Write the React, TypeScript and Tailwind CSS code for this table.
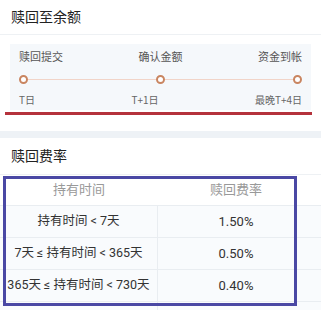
import React from 'react';

const steps = [
  { label: '赎回提交', day: 'T日' },
  { label: '确认金额', day: 'T+1日' },
  { label: '资金到帐', day: '最晚T+4日' },
];

const rates = [
  { range: '持有时间 < 7天', rate: '1.50%' },
  { range: '7天 ≤ 持有时间 < 365天', rate: '0.50%' },
  { range: '365天 ≤ 持有时间 < 730天', rate: '0.40%' },
];

function Dot() {
  return <span className="w-[9px] h-[9px] rounded-full border-2 border-[#c98560] bg-white flex-shrink-0" />;
}

export default function App() {
  return (
    <div
      className="relative w-[321px] h-[310px] overflow-hidden bg-white text-[#333]"
      style={{ fontFamily: 'Roboto, "Noto Sans CJK SC", "Noto Sans", sans-serif' }}
    >
      {/* 赎回至余额 */}
      <div className="h-[35px] px-[11px] flex items-center text-[14px] text-[#222] border-b border-[#eef1f4]">
        赎回至余额
      </div>

      <div className="mt-[9px] mx-[10px] bg-[#f5f8fb] px-[9px] pt-[6px] pb-[3px]">
        <div className="flex justify-between text-[11px] leading-[16px] text-[#555]">
          {steps.map(s => (
            <span key={s.label}>{s.label}</span>
          ))}
        </div>
        <div className="mt-[9px] flex items-center">
          <Dot />
          <span className="flex-1 h-px bg-[#f1d4c8]" />
          <Dot />
          <span className="flex-1 h-px bg-[#f1d4c8]" />
          <Dot />
        </div>
        <div
          className="mt-[9px] flex justify-between text-[10px] leading-[14px] text-[#666]"
          style={{ fontFamily: '"Noto Sans CJK SC", sans-serif' }}
        >
          {steps.map(s => (
            <span key={s.day}>{s.day}</span>
          ))}
        </div>
      </div>

      {/* 标注红线 */}
      <div className="mt-[2px] ml-[5px] w-[307px] h-[3px] bg-[#b5323c]" />

      <div className="mt-[16px] h-[7px] bg-[#eef2f6]" />

      {/* 赎回费率 */}
      <div className="h-[37px] px-[11px] flex items-center text-[14px] text-[#222] border-b border-[#eef1f4]">
        赎回费率
      </div>

      <div className="text-[13px]">
        <div className="grid grid-cols-[158px_1fr] h-[31px] items-center text-[#999] border-b border-[#e9edf1]">
          <span className="text-center">持有时间</span>
          <span className="text-center pr-[7px]">赎回费率</span>
        </div>
        {rates.map(r => (
          <div key={r.rate} className="grid grid-cols-[158px_1fr] h-[32px] bg-[#f9fbfd] border-b border-[#e9edf1]">
            <span className="flex items-center justify-center border-r border-[#e9edf1] whitespace-nowrap text-[12.5px]">{r.range}</span>
            <span className="flex items-center justify-center pr-[7px]">{r.rate}</span>
          </div>
        ))}
        <div className="grid grid-cols-[158px_1fr] h-[20px] bg-[#f9fbfd]">
          <span className="border-r border-[#e9edf1]" />
          <span />
        </div>
      </div>

      {/* 标注蓝框 */}
      <div className="absolute left-[3px] top-[176px] w-[294px] h-[130px] border-[3px] border-[#4a48a4]" />
    </div>
  );
}
